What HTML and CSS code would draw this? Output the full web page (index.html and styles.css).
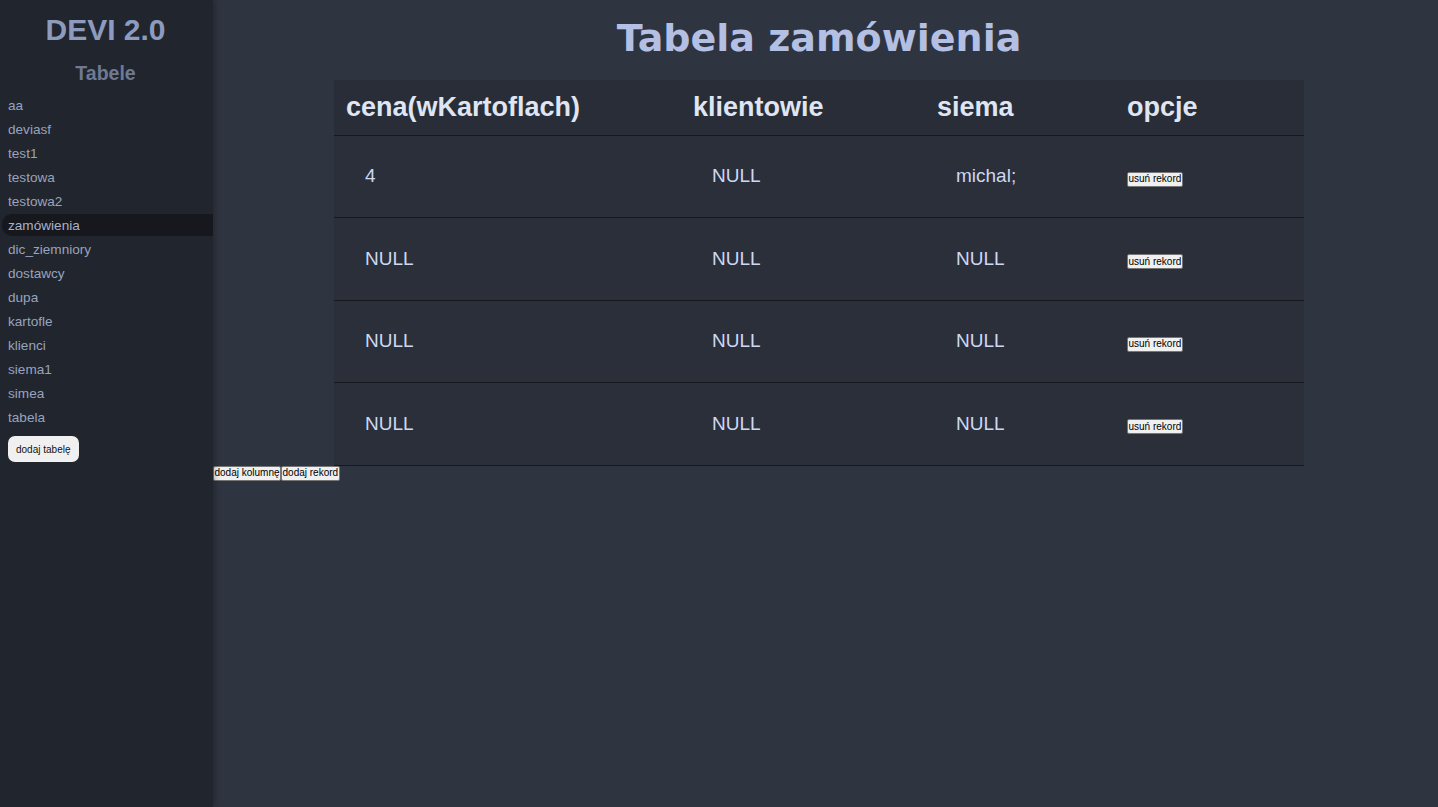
FILE: index.html
```html
<!DOCTYPE html>
<html lang="pl">
<head>
<meta charset="utf-8">
<title>DEVI 2.0</title>
<link rel="stylesheet" href="styles.css">
</head>
<body>
<div class="app">
  <aside class="sidebar">
    <div class="logo">DEVI 2.0</div>
    <div class="section">Tabele</div>
    <ul class="tables">
      <li>aa</li>
      <li>deviasf</li>
      <li>test1</li>
      <li>testowa</li>
      <li>testowa2</li>
      <li class="active">zamówienia</li>
      <li>dic_ziemniory</li>
      <li>dostawcy</li>
      <li>dupa</li>
      <li>kartofle</li>
      <li>klienci</li>
      <li>siema1</li>
      <li>simea</li>
      <li>tabela</li>
    </ul>
    <button class="add-table">dodaj tabelę</button>
  </aside>
  <main class="main">
    <h1 class="title">Tabela zamówienia</h1>
    <table class="data">
      <thead>
        <tr><th class="c1">cena(wKartoflach)</th><th class="c2">klientowie</th><th class="c3">siema</th><th class="c4">opcje</th></tr>
      </thead>
      <tbody>
        <tr><td class="val">4</td><td class="val">NULL</td><td class="val">michal;</td><td class="opt"><button class="small">usuń rekord</button></td></tr>
        <tr><td class="val">NULL</td><td class="val">NULL</td><td class="val">NULL</td><td class="opt"><button class="small">usuń rekord</button></td></tr>
        <tr><td class="val">NULL</td><td class="val">NULL</td><td class="val">NULL</td><td class="opt"><button class="small">usuń rekord</button></td></tr>
        <tr><td class="val">NULL</td><td class="val">NULL</td><td class="val">NULL</td><td class="opt"><button class="small">usuń rekord</button></td></tr>
      </tbody>
    </table>
    <div class="actions"><button class="small">dodaj kolumnę</button><button class="small">dodaj rekord</button></div>
  </main>
</div>
</body>
</html>
```

FILE: styles.css
```css
* { box-sizing: border-box; }
html, body { margin: 0; padding: 0; height: 100%; }
body {
  background: #2f3441;
  font-family: "Liberation Sans", Arial, sans-serif;
}
.app { display: flex; min-height: 807px; }
.sidebar {
  width: 213px;
  flex-shrink: 0;
  background: #21252e;
  box-shadow: 2px 0 6px rgba(0,0,0,0.25);
  position: relative;
  z-index: 1;
  padding-top: 12px;
}
.logo {
  text-align: center;
  font-weight: bold;
  font-size: 30px;
  color: #8d9bbf;
  line-height: 36px;
  padding-right: 2px;
}
.section {
  text-align: center;
  font-weight: bold;
  font-size: 19.5px;
  color: #6e7a94;
  margin-top: 14px;
  line-height: 22px;
  padding-right: 2px;
}
.tables {
  list-style: none;
  margin: 9px 0 0 0;
  padding: 0 0 0 2px;
}
.tables li {
  font-size: 13.6px;
  color: #98a3bd;
  line-height: 21px;
  height: 24px;
  padding: 0 0 0 6px;
  display: flex;
  align-items: center;
}
.tables li.active {
  background: #16181e;
  border-radius: 10px 0 0 10px;
  color: #a6b2cc;
  height: 22px;
  margin: 1px 0 1px 0;
}
.add-table {
  margin: 7px 0 0 8px;
  font-family: "Liberation Sans", Arial, sans-serif;
  font-size: 10px;
  color: #111;
  background: #f0f0f0;
  border: none;
  border-radius: 7px;
  padding: 0 8px;
  height: 26px;
}
.main {
  flex: 1;
  display: flex;
  flex-direction: column;
  padding-right: 13px;
}
.title {
  margin: 15px 0 0 0;
  text-align: center;
  font-family: "DejaVu Sans", Verdana, sans-serif;
  font-weight: bold;
  font-size: 38px;
  line-height: 47px;
  color: #b3bfe3;
  height: 65px;
}
.data {
  width: 970px;
  align-self: center;
  border-collapse: collapse;
  background: #2b2f3a;
}
.data th {
  text-align: left;
  font-size: 27px;
  font-weight: bold;
  color: #dfe5f2;
  height: 55px;
  padding: 0 0 0 12px;
  border-bottom: 1px solid #16181d;
  background: #292d37;
}
.data th.c1 { width: 347px; }
.data th.c2 { width: 244px; }
.data th.c3 { width: 190px; }
.data td {
  height: 82.5px;
  border-bottom: 1px solid #16181d;
  font-size: 19px;
  color: #cdd8f2;
  vertical-align: middle;
}
.data td.val { padding: 0 0 0 31px; }
.data td.opt { padding: 0 0 0 12px; }
.small {
  font-family: "Liberation Sans", Arial, sans-serif;
  font-size: 10px;
  color: #000;
  background: #f0f0f0;
  border: 1px solid #767676;
  border-radius: 2px;
  padding: 0 0.5px;
  height: 15px;
  line-height: 12px;
}
.actions {
  display: flex;
}
```
